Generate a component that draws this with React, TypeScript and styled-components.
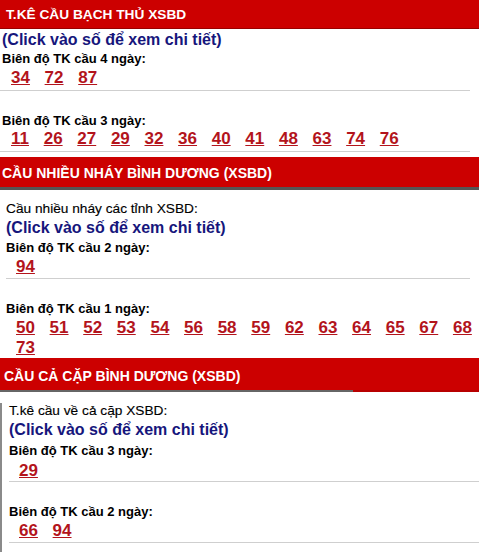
import styled, { createGlobalStyle, css } from "styled-components";

const GlobalStyle = createGlobalStyle`
  body {
    margin: 0;
    background: #ffffff;
    font-family: "Liberation Sans", Arial, sans-serif;
  }
`;

const Page = styled.div`
  width: 479px;
  overflow: hidden;
`;

type HeaderVariant = "thin" | "thick" | "split";

const headerEdges: Record<HeaderVariant, ReturnType<typeof css>> = {
  thin: css`
    border-bottom: 1px solid #990000;
  `,
  thick: css`
    border-bottom: 3px solid #555555;
  `,
  split: css`
    border-bottom: 2px solid #666666;
    border-image: linear-gradient(to right, #666666 353px, #b80000 353px) 1;
  `,
};

const SectionHeader = styled.div<{
  $variant: HeaderVariant;
  $indent: number;
  $top: number;
  $line: number;
  $size: number;
}>`
  background: #cc0000;
  color: #ffffff;
  font-weight: bold;
  font-size: ${p => p.$size}px;
  line-height: ${p => p.$line}px;
  padding: ${p => p.$top}px 0 0 ${p => p.$indent}px;
  white-space: nowrap;
  ${p => headerEdges[p.$variant]}
`;

const Section = styled.section<{ $gap?: number }>`
  margin-top: ${p => p.$gap ?? 0}px;
`;

const Body = styled.div<{ $indent: number; $edge?: boolean; $tail?: number }>`
  padding-left: ${p => p.$indent}px;
  padding-bottom: ${p => p.$tail ?? 0}px;
  ${p =>
    p.$edge &&
    css`
      border-left: 2px solid #8a8a8a;
    `}
`;

const Intro = styled.div<{ $gap: number }>`
  margin-top: ${p => p.$gap}px;
  font-size: 13.7px;
  line-height: 16px;
  color: #000000;
  -webkit-text-stroke: 0.15px #000000;
`;

const Hint = styled.div<{ $gap: number }>`
  margin-top: ${p => p.$gap}px;
  font-size: 16px;
  line-height: 19px;
  font-weight: bold;
  color: #16167c;
  white-space: nowrap;
`;

const Block = styled.div<{
  $gap: number;
  $bleed?: number;
  $right?: number;
  $ruled?: boolean;
  $pad?: number;
}>`
  margin-top: ${p => p.$gap}px;
  margin-left: ${p => -(p.$bleed ?? 0)}px;
  padding-left: ${p => p.$bleed ?? 0}px;
  margin-right: ${p => (p.$ruled ? p.$right ?? 0 : 0)}px;
  padding-bottom: ${p => p.$pad ?? 0}px;
  ${p =>
    p.$ruled &&
    css`
      border-bottom: 1px solid #cfcfcf;
    `}
`;

const Label = styled.div`
  font-size: 13px;
  line-height: 15px;
  font-weight: bold;
  color: #000000;
`;

const Numbers = styled.div<{ $lead: number; $gap: number }>`
  display: flex;
  flex-wrap: wrap;
  column-gap: 14.7px;
  margin-top: ${p => p.$gap}px;
  padding-left: ${p => p.$lead}px;
`;

const Num = styled.a`
  font-size: 17px;
  line-height: 20px;
  font-weight: bold;
  color: #b3141c;
  text-decoration: underline;
`;

type RangeProps = {
  title: string;
  values: string[];
  gap: number;
  numGap: number;
  lead: number;
  bleed?: number;
  right?: number;
  ruled?: boolean;
  pad?: number;
};

function Range({ title, values, gap, numGap, lead, bleed, right, ruled = true, pad }: RangeProps) {
  return (
    <Block $gap={gap} $bleed={bleed} $right={right} $ruled={ruled} $pad={pad}>
      <Label>{title}</Label>
      <Numbers $lead={lead} $gap={numGap}>
        {values.map(v => (
          <Num key={v} href="#">
            {v}
          </Num>
        ))}
      </Numbers>
    </Block>
  );
}

const HINT = "(Click vào số để xem chi tiết)";

export default function App() {
  return (
    <Page>
      <GlobalStyle />

      <Section>
        <SectionHeader $variant="thin" $indent={6} $top={2} $line={26} $size={13.7}>
          T.KÊ CẦU BẠCH THỦ XSBD
        </SectionHeader>
        <Body $indent={2}>
          <Hint $gap={1}>{HINT}</Hint>
          <Range
            title="Biên độ TK cầu 4 ngày:"
            values={["34", "72", "87"]}
            gap={2}
            numGap={2}
            lead={9}
            bleed={2}
            right={9}
            pad={2}
          />
          <Range
            title="Biên độ TK cầu 3 ngày:"
            values={["11", "26", "27", "29", "32", "36", "40", "41", "48", "63", "74", "76"]}
            gap={22}
            numGap={1}
            lead={9}
            bleed={2}
            right={9}
            pad={2}
          />
        </Body>
      </Section>

      <Section $gap={5}>
        <SectionHeader $variant="thick" $indent={2} $top={2} $line={28} $size={14}>
          CẦU NHIỀU NHÁY BÌNH DƯƠNG (XSBD)
        </SectionHeader>
        <Body $indent={6}>
          <Intro $gap={10.5}>Cầu nhiều nháy các tỉnh XSBD:</Intro>
          <Hint $gap={1}>{HINT}</Hint>
          <Range
            title="Biên độ TK cầu 2 ngày:"
            values={["94"]}
            gap={3}
            numGap={2}
            lead={10}
            right={9}
            pad={1.5}
          />
          <Range
            title="Biên độ TK cầu 1 ngày:"
            values={[
              "50", "51", "52", "53", "54", "56", "58", "59",
              "62", "63", "64", "65", "67", "68", "73",
            ]}
            gap={22}
            numGap={2}
            lead={10}
            ruled={false}
          />
        </Body>
      </Section>

      <Section>
        <SectionHeader $variant="split" $indent={4} $top={5} $line={27} $size={14}>
          CẦU CẢ CẶP BÌNH DƯƠNG (XSBD)
        </SectionHeader>
        <Body $indent={7} $edge $tail={12}>
          <Intro $gap={11}>T.kê cầu về cả cặp XSBD:</Intro>
          <Hint $gap={1}>{HINT}</Hint>
          <Range
            title="Biên độ TK cầu 3 ngày:"
            values={["29"]}
            gap={4}
            numGap={3}
            lead={10}
          />
          <Range
            title="Biên độ TK cầu 2 ngày:"
            values={["66", "94"]}
            gap={22}
            numGap={2}
            lead={10}
            pad={1}
          />
        </Body>
      </Section>
    </Page>
  );
}
